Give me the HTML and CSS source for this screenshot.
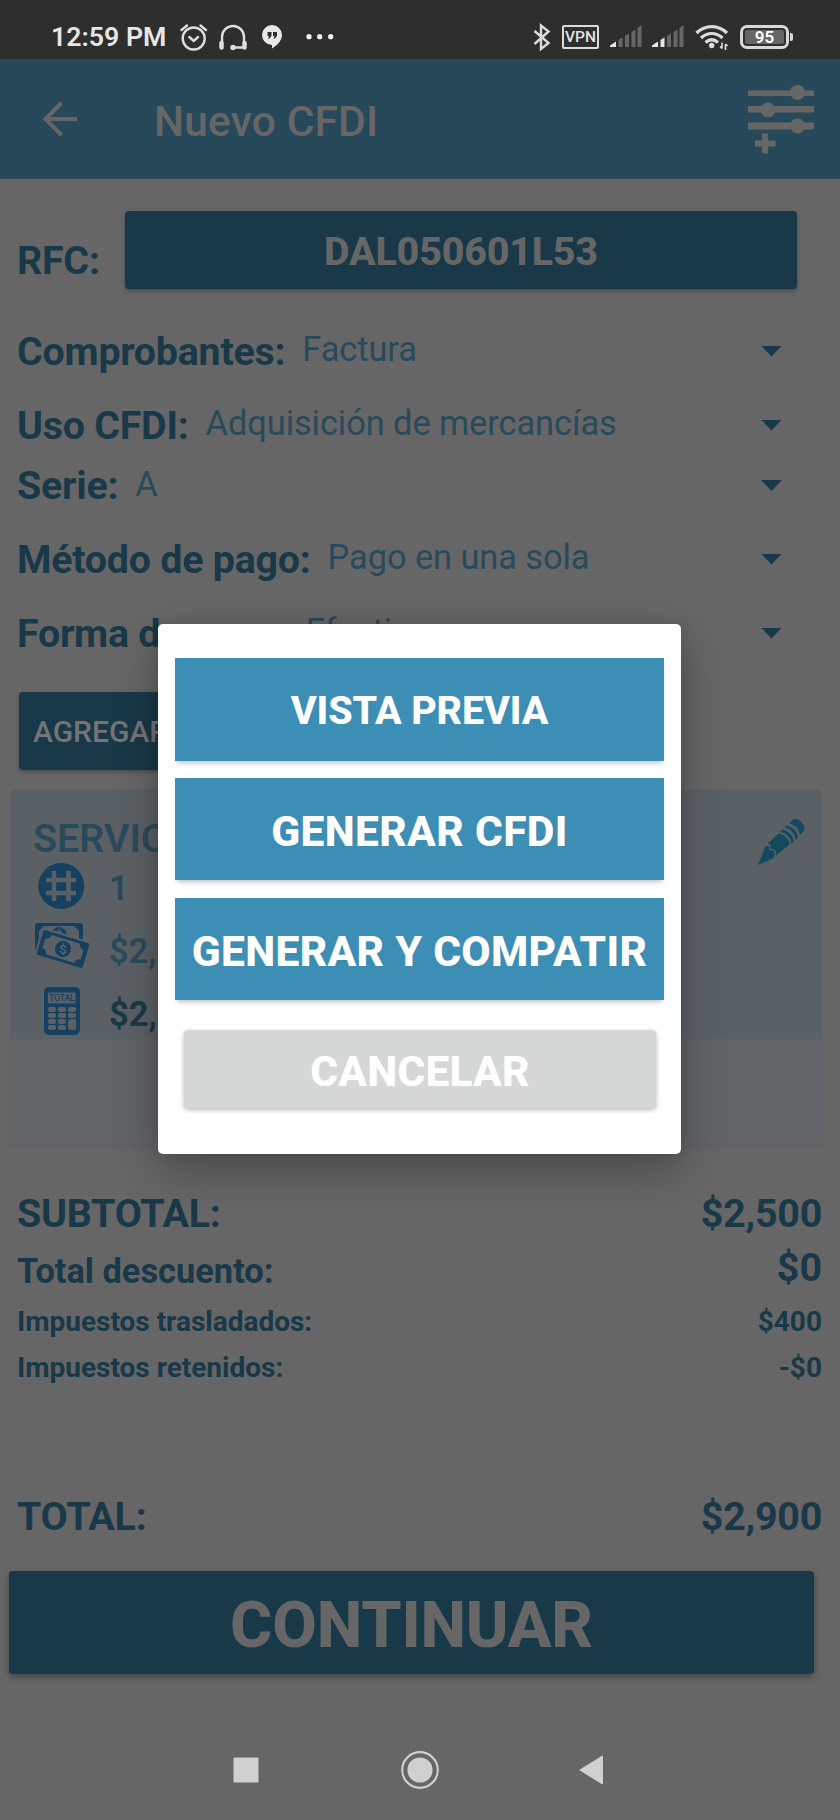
FILE: index.html
```html
<!DOCTYPE html>
<html lang="es">
<head>
<meta charset="utf-8">
<title>Nuevo CFDI</title>
<link rel="stylesheet" href="styles.css">
</head>
<body>
<div class="screen">
  <div class="status">
    <span class="time">12:59 PM</span>
    <svg class="st-left" width="170" height="36" viewBox="176 20 170 36" fill="none" stroke="#dedede" stroke-width="2.4" stroke-linecap="round">
      <circle cx="193.700" cy="38.500" r="11"/><path d="M189.300 37l4.400 4 4.400-4M181.500 30l5.500-4.500M206 30l-5.500-4.500"/>
      <path d="M222 43V37a11 11 0 0 1 22 0v6M244 46v1.500h-11"/>
      <path d="M221.500 43v4.500M244.500 43v4.500" stroke-width="4.500"/><circle cx="233" cy="47.500" r="1.500" fill="#dedede"/>
      <path d="M272 25a10 10 0 0 1 10 10c0 5-4 10-10 13.500V45a10 10 0 0 1 0-20z" fill="#e8e8e8" stroke="none"/>
      <path d="M267.500 32h4v4l-2 2.500h-1.500l1-2.500h-1.500zM273 32h4v4l-2 2.500h-1.500l1-2.500H273z" fill="#2e2e2e" stroke="none"/>
      <g fill="#f4f4f4" stroke="none"><circle cx="309" cy="36.700" r="2.600"/><circle cx="319.700" cy="36.700" r="2.600"/><circle cx="330.700" cy="36.700" r="2.600"/></g>
    </svg>
    <div class="st-right">
      <svg width="20" height="30" viewBox="532 22 20 30" fill="none" stroke="#dcdcdc" stroke-width="2.400"><path d="M534.500 31l14 12-7.500 6V25.500l7.500 6-14 12.500"/></svg>
      <span class="vpn">VPN</span>
      <svg class="sig" width="32" height="24" viewBox="0 0 32 24"><path class="on" d="M0 20.500l6-4V22H0z"/><path class="off" d="M8.500 15l4-2.500V22h-4zM15 11l4-2.500V22h-4zM21.500 7l4-2.500V22h-4zM27.500 3L31.500 0v22h-4z"/></svg>
      <svg class="sig" width="32" height="24" viewBox="0 0 32 24"><path class="on" d="M0 20.500l6-4V22H0zM8.500 15l4-2.500V22h-4z"/><path class="off" d="M15 11l4-2.500V22h-4zM21.500 7l4-2.500V22h-4zM27.500 3L31.500 0v22h-4z"/></svg>
      <svg class="wifi" width="34" height="28" viewBox="695 24 34 28" fill="none" stroke="#dcdcdc" stroke-width="3.200"><path d="M696.500 34c9-8.500 21.500-8.500 30.500 0M701 39c6.500-6 15-6 21.500 0M705.500 43.500c4-3.500 8.500-3.500 12.500 0"/><circle cx="711.700" cy="46.500" r="2.700" fill="#dcdcdc" stroke="none"/><path d="M722 43.500v6M725.500 45v6M720 47.500l2 2M727.500 47l-2-2" stroke-width="1.600"/></svg>
      <span class="batt"><span class="level">95</span></span><i class="nub"></i>
    </div>
  </div>
  <div class="appbar">
    <svg class="back" width="36" height="36" viewBox="0 0 36 36" fill="none" stroke="#666" stroke-width="4"><path d="M35 18H4M19.500 2L3.500 18l16 16"/></svg>
    <h1>Nuevo CFDI</h1>
    <svg class="sliders" width="68" height="70" viewBox="0 0 68 70" fill="#666"><path d="M0 5.500h66v5.500H0zM0 21h66v6.500H0zM0 37.500h66v7H0zM14 48.500h6v7h7.500v6H20v7h-6v-7H7v-6h7z"/><circle cx="49.500" cy="7.500" r="7.500"/><circle cx="20" cy="25" r="7.500"/><circle cx="49.500" cy="41" r="7.500"/></svg>
  </div>
  <div class="form">
    <div class="rfc"><span class="label">RFC:</span><div class="raised rfc-btn">DAL050601L53</div></div>
    <div class="field"><span class="label">Comprobantes:</span><span class="value">Factura</span><i class="caret"></i></div>
    <div class="field"><span class="label">Uso CFDI:</span><span class="value">Adquisición de mercancías</span><i class="caret"></i></div>
    <div class="field serie"><span class="label">Serie:</span><span class="value">A</span><i class="caret"></i></div>
    <div class="field pay"><span class="label">Método de pago:</span><span class="value">Pago en una sola</span><i class="caret"></i></div>
    <div class="field pay"><span class="label">Forma de pago:</span><span class="value">Efectivo</span><i class="caret"></i></div>
    <div class="raised add">AGREGAR</div>
  </div>
  <div class="list">
    <div class="card">
      <div class="lines">
        <div class="name">SERVICIO</div>
        <div class="line l1"><svg width="56" height="48" viewBox="0 0 56 48"><circle cx="28.300" cy="24" r="23" fill="#15405f"/><path d="M21 9v30M35.500 9v30M13 18h30M13 31h30" stroke="#5b6064" stroke-width="4.600"/></svg><span>1</span></div>
        <div class="line l2"><svg width="56" height="48" viewBox="34 921 56 48">
          <rect x="36" y="923" width="48" height="28" rx="3" fill="#15405f"/><path d="M45 926h30l5 5v16H40v-16z" fill="#5b6064"/><circle cx="60" cy="934.500" r="7.500" fill="#15405f"/><path d="M60 929v6M57 932h6" stroke="#5b6064" stroke-width="1.500"/>
          <g transform="rotate(17 64 949)"><rect x="39" y="935" width="50" height="28" rx="3" fill="#15405f" stroke="#5b6064" stroke-width="2"/><path d="M49 939h30c0 3 2 5 5 5v10c-3 0-5 2-5 5H49c0-3-2-5-5-5v-10c3 0 5-2 5-5z" fill="#5b6064"/><circle cx="64" cy="949" r="8" fill="#15405f"/></g><text x="64" y="954" class="dollar">$</text></svg><span>$2,500</span></div>
        <div class="line l3"><svg width="56" height="50" viewBox="34 985 56 50"><rect x="45" y="986" width="36" height="48" rx="5" fill="#15405f"/><rect x="49" y="991.500" width="27.500" height="11" fill="#5b6064"/><text x="62.800" y="1000" class="tot">TOTAL</text>
          <g fill="#5b6064"><rect x="49" y="1006" width="8" height="5" rx="2"/><rect x="59" y="1006" width="8" height="5" rx="2"/><rect x="69" y="1006" width="8" height="5" rx="2"/><rect x="49" y="1012" width="8" height="5" rx="2"/><rect x="59" y="1012" width="8" height="5" rx="2"/><rect x="69" y="1012" width="8" height="5" rx="2"/><rect x="49" y="1018" width="8" height="5" rx="2"/><rect x="59" y="1018" width="8" height="5" rx="2"/><rect x="49" y="1024" width="8" height="5" rx="2"/><rect x="59" y="1024" width="8" height="5" rx="2"/><rect x="69" y="1018" width="8" height="11" rx="2.500"/></g></svg><span>$2,500</span></div>
      </div>
      <svg class="pencil" width="48" height="48" viewBox="0 0 48 48" fill="#15495f"><path d="M0 47L7.500 28.500l3.500-.5v3.500l5 1.500.5 5.500-1.500 2z"/><path d="M9.500 26L20.500 15.500c5 0 11 5 11 11L18 37.500l-.5-5.500-5.500-1.500.5-4z"/><path d="M22 13.500l2-2c6 1 11.500 6 12 12l-2.500 2c-1-6-5-10.500-11.500-12zM26.500 9.500l2-2c6 1 11 6 11.500 12l-2.500 2c-1-6-5-10.500-11-12zM31 5.500l4-4c4-3 13 5 11.500 10.500L42 17c-1-6-5-10.500-11-11.500z"/></svg>
    </div>
  </div>
  <div class="totals">
    <div class="row big"><span>SUBTOTAL:</span><b>$2,500</b></div>
    <div class="row mid"><span>Total descuento:</span><b>$0</b></div>
    <div class="row small"><span>Impuestos trasladados:</span><b>$400</b></div>
    <div class="row small"><span>Impuestos retenidos:</span><b>-$0</b></div>
    <div class="row big total"><span>TOTAL:</span><b>$2,900</b></div>
  </div>
  <div class="raised continue">CONTINUAR</div>
  <div class="nav">
    <svg width="26" height="26"><rect x=".5" y=".5" width="25" height="25" rx="1" fill="#d0d0d0"/></svg>
    <svg width="40" height="40" fill="#d0d0d0"><circle cx="20" cy="20" r="17.800" fill="none" stroke="#d0d0d0" stroke-width="2.200"/><circle cx="20" cy="20" r="12.600"/></svg>
    <svg width="26" height="30" fill="#d0d0d0"><path d="M1 15L24 .8q1-.3 1 .7v27q0 1-1 .7z"/></svg>
  </div>
  <div class="dialog">
    <div class="opt o1">VISTA PREVIA</div>
    <div class="opt">GENERAR CFDI</div>
    <div class="opt">GENERAR Y COMPATIR</div>
    <div class="cancel">CANCELAR</div>
  </div>
</div>
</body>
</html>
```
FILE: styles.css
```css
* { box-sizing: border-box; }
body { margin: 0; background: #666; font-family: Roboto, "Liberation Sans", sans-serif; }
svg { display: block; flex: none; }
.screen { position: relative; width: 840px; height: 1820px; overflow: hidden; color: #193848; white-space: nowrap; }

.status { height: 59px; background: #2e2e2e; display: flex; padding-left: 51px; color: #e6e6e6; }
.time { width: 125px; font-size: 26.7px; font-weight: 600; line-height: 75px; }
.st-left { margin-top: 20px; }
.st-right { display: flex; align-items: center; height: 38px; margin-top: 18px; margin-left: 186px; }
.vpn { width: 37px; height: 24px; margin-left: 10px; border: 2px solid #dcdcdc; border-radius: 2px; font-size: 15.500px; font-weight: 500; line-height: 20px; text-align: center; }
.sig { margin-left: 10px; }
.vpn + .sig { margin-left: 11px; }
.on { fill: #e6e6e6; }
.off { fill: #666; }
.wifi { margin-left: 11px; }
.batt { width: 49px; height: 24px; margin-left: 11px; border: 3px solid #d8d8d8; border-radius: 7px; padding: 2px; }
.level { display: block; height: 14px; border-radius: 2px; background: #666; color: #fff; font-size: 17px; font-weight: 600; line-height: 15px; text-align: center; }
.nub { width: 3px; height: 8px; margin-left: 1px; border-radius: 0 2px 2px 0; background: #d8d8d8; }

.appbar { height: 120px; background: #28495a; display: flex; color: #666; }
.back { margin: 42px 0 0 42px; }
h1 { margin: 0 0 0 76px; width: 592px; font-size: 42.5px; font-weight: 500; line-height: 125px; letter-spacing: .15px; }
.sliders { margin-top: 26px; margin-left: 2px; }

.form { height: 610px; padding-top: 32px; padding-left: 17px; }
.label { font-size: 39.4px; font-weight: 700; letter-spacing: -.25px; }
.raised { display: flex; align-items: center; justify-content: center; background: #193848; border-radius: 4px; color: #666; box-shadow: 0 2px 4px rgba(0,0,0,.28); }
.rfc { display: flex; height: 78px; margin-bottom: 25px; }
.rfc .label { width: 108px; line-height: 99px; }
.rfc-btn { width: 672px; padding-top: 2px; font-size: 39.4px; font-weight: 800; letter-spacing: -.2px; }
.field { display: flex; align-items: center; height: 74px; padding-right: 58px; }
.value { flex: 1; margin-left: 17px; padding-bottom: 4px; font-size: 34.4px; letter-spacing: -.07px; color: #2a4a5c; }
.serie { height: 47px; margin-bottom: 13px; }
.caret { width: 21px; height: 11px; background: #193848; clip-path: polygon(0 0, 100% 0, 50% 100%); }
.add { width: 260px; height: 78px; margin: 22px 0 0 2px; padding-left: 14px; justify-content: flex-start; font-size: 30px; font-weight: 500; color: #747474; }

.list { width: 814px; height: 361px; margin-left: 9px; padding: 0 2px; background: #626366; }
.card { display: flex; justify-content: space-between; height: 250px; padding-left: 22px; padding-right: 15px; background: #5b6064; }
.name { height: 72px; font-size: 39.4px; font-weight: 600; line-height: 100px; color: #2a4a5c; }
.line { display: flex; align-items: center; font-size: 34.4px; font-weight: 600; color: #2a4a5c; }
.line span { margin-left: 20px; }
.l1 { height: 50px; }
.l1 span { padding-top: 4px; }
.l2 { height: 68px; }
.l2 span { padding-top: 12px; }
.l3 { height: 58px; color: #193848; font-weight: 700; }
.l3 svg { margin-top: 5px; }
.l3 span { padding-top: 12px; }
.dollar { font-size: 13px; font-weight: 700; fill: #5b6064; text-anchor: middle; }
.tot { font-size: 8.5px; font-weight: 500; fill: #15405f; text-anchor: middle; }
.pencil { margin-top: 29px; }

.totals { height: 421px; padding: 34px 18px 0 17px; font-weight: 700; }
.row { display: flex; justify-content: space-between; align-items: center; }
.row b { font-weight: 700; }
.big { height: 58px; font-size: 39.4px; letter-spacing: -.25px; }
.mid { height: 56px; padding-top: 1px; font-size: 34.4px; }
.mid b { font-size: 39.4px; padding-bottom: 6px; }
.small { height: 46.500px; font-size: 28px; }
.total { margin-top: 96px; }
.continue { width: 805px; height: 103px; margin-left: 9px; padding-top: 5px; font-size: 64.7px; font-weight: 800; letter-spacing: -.2px; box-shadow: 0 3px 6px rgba(0,0,0,.35); }
.nav { display: flex; align-items: center; height: 40px; margin: 76px 0 0 233px; }
.nav svg + svg { margin-left: 141px; }
.nav svg + svg + svg { margin-left: 138px; }

.dialog { position: absolute; left: 158px; top: 624px; width: 523px; height: 530px; padding: 34px 17px 0; border-radius: 5px; background: #fff; box-shadow: 0 16px 44px rgba(0,0,0,.28), 0 0 14px rgba(0,0,0,.08); }
.opt { height: 102.500px; margin-bottom: 17.300px; background: #3d8eb5; color: #fff; box-shadow: 0 4px 5px -2px rgba(0,0,0,.25); font-size: 42.5px; font-weight: 800; line-height: 107px; letter-spacing: .35px; text-align: center; }
.o1 { font-size: 39.4px; line-height: 105px; letter-spacing: -.1px; }
.cancel { width: 472px; height: 78px; margin: 30px 0 0 9px; border-radius: 4px; background: #d6d8d7; color: #fff; box-shadow: 0 2px 5px rgba(0,0,0,.28); font-size: 42.5px; font-weight: 800; letter-spacing: .2px; line-height: 83px; text-align: center; }
```
